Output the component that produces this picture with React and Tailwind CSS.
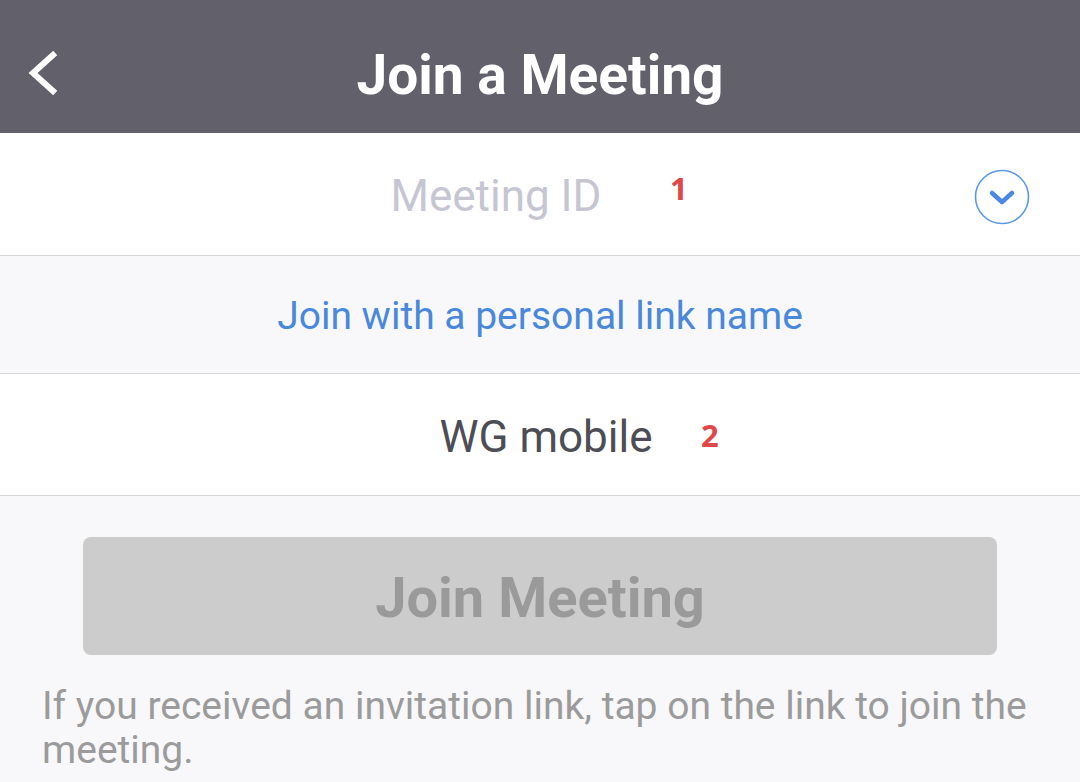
import React from "react";

export default function App() {
  return (
    <div className="w-[1080px] h-[782px] overflow-hidden bg-[#f8f8fb] flex flex-col" style={{ fontFamily: "Roboto, 'Liberation Sans', sans-serif" }}>
      <div className="h-[133px] bg-[#62616b] flex items-center relative shrink-0">
        <svg className="absolute left-[26px] top-[51px]" width="32" height="44" viewBox="0 0 32 44">
          <path d="M27 4 L7 22 L27 40" fill="none" stroke="#ffffff" strokeWidth="6" strokeLinecap="square" />
        </svg>
        <div className="w-full text-center text-white font-bold text-[55px] leading-none pt-[18px]">Join a Meeting</div>
      </div>
      <div className="h-[123px] bg-white border-b border-[#d6d6da] flex items-center shrink-0 relative">
        <div className="w-[992px] text-center text-[44px] text-[#c6c6d2] leading-none pt-[4px]">Meeting ID</div>
        <span className="absolute left-[670px] top-[40px] text-[31px] font-bold text-[#e04848] leading-none" style={{ fontFamily: "'Open Sans', sans-serif" }}>1</span>
        <svg className="absolute left-[974px] top-[36px]" width="56" height="56" viewBox="0 0 56 56">
          <circle cx="28" cy="28" r="26.5" fill="none" stroke="#5b9be6" strokeWidth="1.6" />
          <path d="M18 24 L28 33 L38 24" fill="none" stroke="#4a8ae6" strokeWidth="4.5" strokeLinecap="round" strokeLinejoin="round" />
        </svg>
      </div>
      <div className="h-[118px] bg-[#f8f8fb] border-b border-[#d6d6da] flex items-center justify-center shrink-0">
        <span className="text-[39px] text-[#4a88dc] leading-none pt-[4px]">Join with a personal link name</span>
      </div>
      <div className="h-[122px] bg-white border-b border-[#d6d6da] flex items-center shrink-0 relative overflow-hidden">
        <div className="w-[1092px] shrink-0 text-center text-[44px] text-[#4d4d55] leading-none pt-[4px]">WG mobile</div>
        <span className="absolute left-[701px] top-[46px] text-[31px] font-bold text-[#e04848] leading-none" style={{ fontFamily: "'Open Sans', sans-serif" }}>2</span>
      </div>
      <div className="px-[83px] pt-[41px]">
        <div className="h-[118px] rounded-[8px] bg-[#cccccc] flex items-center justify-center">
          <span className="text-[56px] font-bold text-[#9a9a9a] leading-none pt-[4px]">Join Meeting</span>
        </div>
      </div>
      <div className="px-[42px] pt-[29px] text-[39px] leading-[44px] text-[#9b9b9b]">
        If you received an invitation link, tap on the link to join the meeting.
      </div>
    </div>
  );
}
